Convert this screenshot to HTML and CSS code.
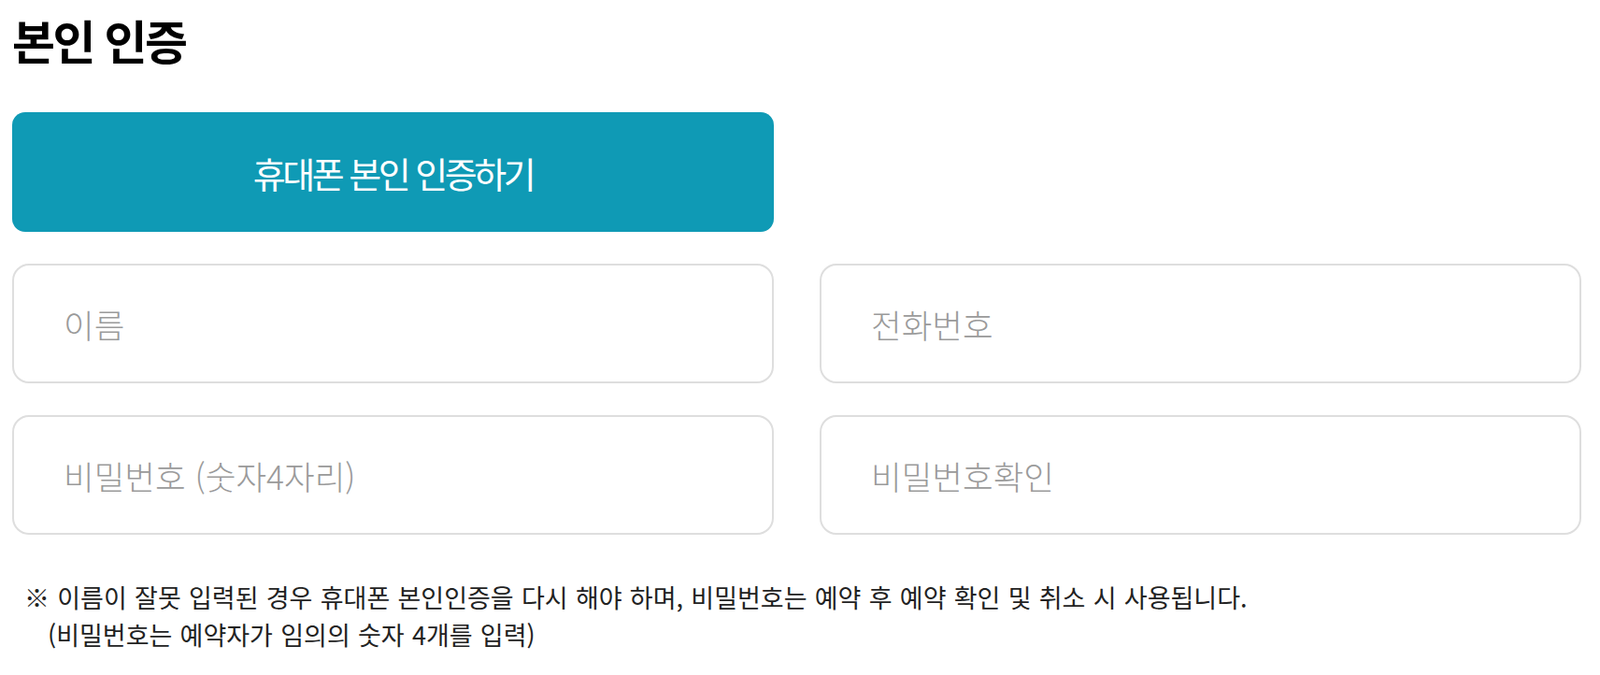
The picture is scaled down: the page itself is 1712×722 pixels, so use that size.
FILE: index.html
```html
<!DOCTYPE html>
<html lang="ko">
<head>
    <meta charset="UTF-8">
    <title>본인 인증</title>
    <link rel="stylesheet" href="styles.css">
</head>
<body>
    <div class="cert-container">
        <h1 class="cert-title">본인 인증</h1>

        <div class="cert-form">
            <button type="button" class="cert-btn">휴대폰 본인 인증하기</button>
            <div class="cert-blank"></div>

            <input type="text" class="cert-input" placeholder="이름">
            <input type="tel" class="cert-input" placeholder="전화번호">
            <input type="password" class="cert-input" placeholder="비밀번호 (숫자4자리)">
            <input type="password" class="cert-input" placeholder="비밀번호확인">
        </div>

        <p class="cert-notice">
            ※ 이름이 잘못 입력된 경우 휴대폰 본인인증을 다시 해야 하며, 비밀번호는 예약 후 예약 확인 및 취소 시 사용됩니다.
            <span class="notice-sub">(비밀번호는 예약자가 임의의 숫자 4개를 입력)</span>
        </p>
    </div>
</body>
</html>
```

FILE: styles.css
```css
body {
    font-family: 'Noto Sans CJK KR', 'Noto Sans', sans-serif;
    background-color: white;
    color: #222;
    margin: 0;
    padding: 0;
}

.cert-container {
    padding: 0 20px 0 13px;
}

.cert-title {
    font-size: 50px;
    font-weight: 700;
    letter-spacing: -2.5px;
    line-height: 60px;
    color: #000;
    margin: 12px 0 48px;
}

.cert-form {
    display: grid;
    grid-template-columns: 1fr 1fr;
    grid-auto-rows: 128px;
    column-gap: 49px;
    row-gap: 34px;
}

.cert-btn {
    font-family: inherit;
    font-size: 38px;
    letter-spacing: -3.5px;
    word-spacing: 1px;
    color: white;
    background-color: #0f9ab5;
    border: none;
    border-radius: 14px;
    cursor: pointer;
}

.cert-input {
    font-family: inherit;
    font-size: 35.5px;
    font-weight: 300;
    color: #333;
    background-color: white;
    border: 2px solid #dedede;
    border-radius: 18px;
    padding: 0 0 0 53px;
    outline: none;
    box-sizing: border-box;
    width: 100%;
    height: 100%;
}

.cert-input::placeholder {
    color: #9a9a9a;
}

.cert-notice {
    font-size: 27px;
    line-height: 40px;
    word-spacing: 0.7px;
    color: #222;
    margin: 47px 0 0;
    padding-left: 13px;
}

.notice-sub {
    display: block;
    padding-left: 25px;
}
```
